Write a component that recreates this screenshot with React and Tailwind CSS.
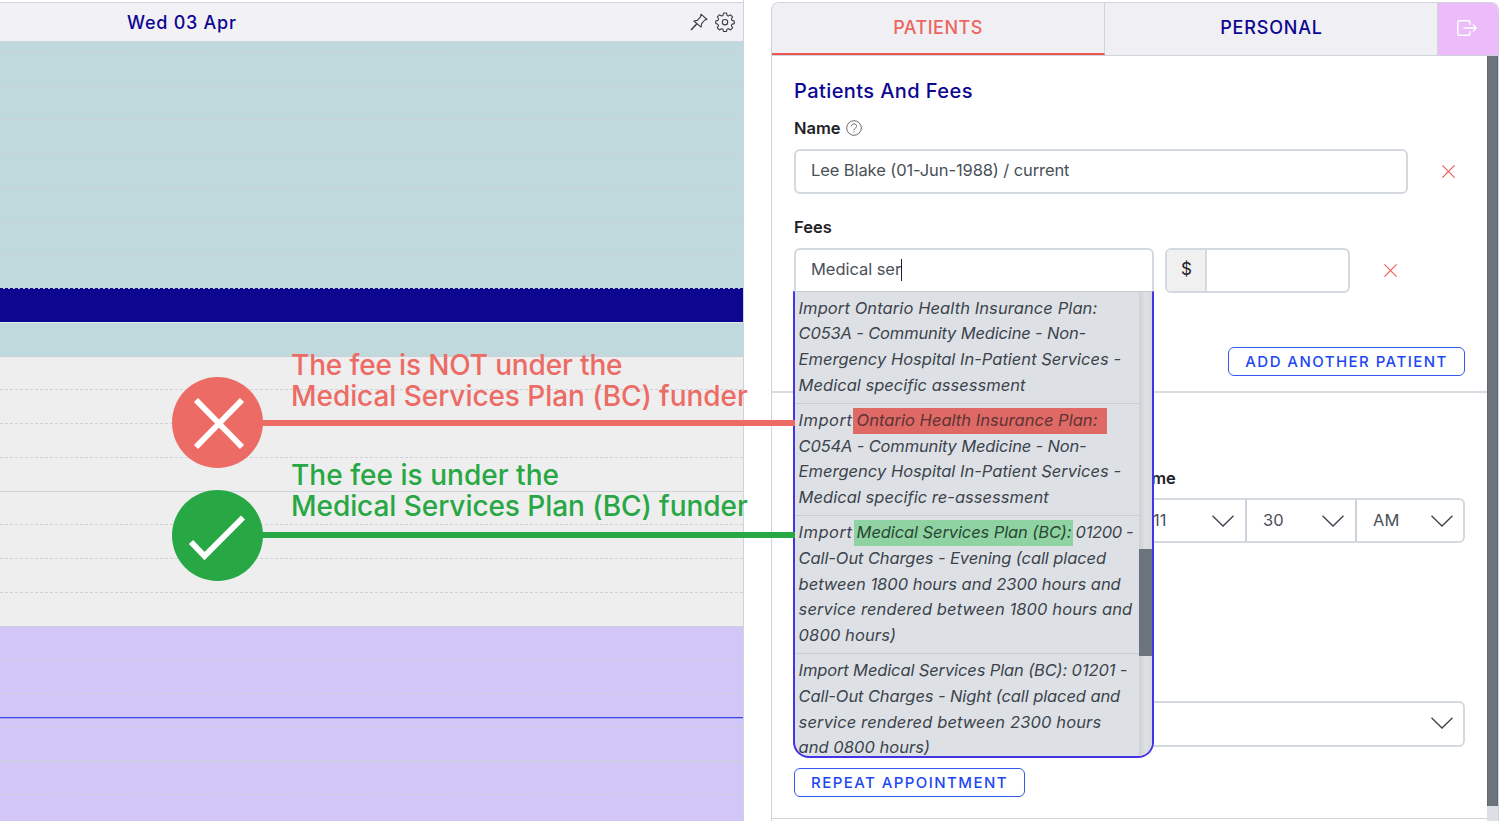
import React from 'react';

const slots = [
    { tone: 'bg-[#bfd9dc]', line: 'border-[#cccfda]', count: 7, start: 1 },
    { tone: 'bg-[#0d0691]', line: 'border-[#dfeaf0]', count: 1, start: 8 },
    { tone: 'bg-[#bfd9dc]', line: 'border-[#cccfda]', count: 1, start: 9 },
    { tone: 'bg-[#eeeeee]', line: 'border-[#ccd2d8]', count: 8, start: 10 },
    { tone: 'bg-[#d2c6f7]', line: 'border-[#c9d0d2]', count: 6, start: 18 }
].flatMap(({ tone, line, count, start }) =>
    Array.from({ length: count }, (_, i) => ({ tone, line, number: start + i }))
);

const slotBorder = (number, line) => {
    if (number === 7) return 'border-dashed border-[#0d0691]';
    if (number === 8 || number % 4 === 1) return `border-solid ${line}`;
    return `border-dashed ${line}`;
};

const feeOptions = [
    {
        lines: [
            { text: 'Import Ontario Health Insurance Plan:', spacing: 'tracking-[0.09px]' },
            { text: 'C053A - Community Medicine - Non-', spacing: 'tracking-[-0.16px]' },
            { text: 'Emergency Hospital In-Patient Services -', spacing: 'tracking-[0.01px]' },
            { text: 'Medical specific assessment', spacing: 'tracking-[0.02px]' }
        ]
    },
    {
        lines: [
            {
                text: 'Import',
                mark: 'Ontario Health Insurance Plan:',
                markClass: 'left-[54px] w-[254px] pl-1 tracking-[0.03px] bg-[#df6964] text-[#5b3436]',
                spacing: 'tracking-[0.5px]'
            },
            { text: 'C054A - Community Medicine - Non-', spacing: 'tracking-[-0.16px]' },
            { text: 'Emergency Hospital In-Patient Services -', spacing: 'tracking-[0.01px]' },
            { text: 'Medical specific re-assessment', spacing: 'tracking-[0.03px]' }
        ]
    },
    {
        lines: [
            {
                text: 'Import',
                mark: 'Medical Services Plan (BC):',
                markClass: 'left-[55px] w-[219px] pl-[3px] tracking-[-0.1px] bg-[#8fd3a2] text-[#294735]',
                after: '01200 -',
                spacing: 'tracking-[0.5px]'
            },
            { text: 'Call-Out Charges - Evening (call placed', spacing: 'tracking-[-0.1px]' },
            { text: 'between 1800 hours and 2300 hours and', spacing: 'tracking-[-0.01px]' },
            { text: 'service rendered between 1800 hours and', spacing: 'tracking-[0.1px]' },
            { text: '0800 hours)', spacing: 'tracking-[0.1px]' }
        ]
    },
    {
        lines: [
            { text: 'Import Medical Services Plan (BC): 01201 -', spacing: 'tracking-[-0.13px]' },
            { text: 'Call-Out Charges - Night (call placed and', spacing: 'tracking-[-0.1px]' },
            { text: 'service rendered between 2300 hours', spacing: 'tracking-[0.12px]' },
            { text: 'and 0800 hours)', spacing: 'tracking-[0.03px]' }
        ]
    }
];

const PinIcon = () => (
    <svg className="h-[18px] w-[18px]" viewBox="0 0 18 18" fill="none" stroke="#3b3d44" strokeWidth="1.1" strokeLinejoin="round">
        <path d="M11 1.2 17 6.5 14.8 7 11.5 10.8 11.1 14.2 3.8 8 7.3 7.4 10.5 3.8Z" />
        <path d="M6.9 10.8 1 17" strokeWidth="1.5" />
    </svg>
);

const GearIcon = () => (
    <svg className="h-5 w-5" viewBox="0 0 20 20" fill="none" stroke="#3b3d44" strokeWidth="1.1" strokeLinejoin="round">
        <path d="M8.5 1h3l.6 2.4 1.3.6 2.2-1.2 2 2-1.2 2.2.6 1.4 2.3.6v2.6l-2.4.7-.5 1.4 1.2 2.1-2.1 2.1-2.1-1.2-1.4.6-.6 2.2h-2.8L8 17.3l-1.4-.6-2.2 1.2-2.1-2.1 1.2-2.1-.6-1.4L.7 11.6V9l2.3-.6.6-1.4-1.2-2.2 2-2L6.6 4l1.4-.6Z" />
        <circle cx="10" cy="10.2" r="2.7" />
    </svg>
);

const CloseIcon = () => (
    <svg className="h-[13px] w-[13px] shrink-0" viewBox="0 0 13 13" stroke="#ec5f5a" strokeWidth="1.2">
        <path d="M.4.4l12.2 12.2M12.6.4.4 12.6" />
    </svg>
);

const ChevronIcon = () => (
    <svg className="h-3 w-[22px] shrink-0" viewBox="0 0 22 12" fill="none" stroke="#3b4148" strokeWidth="1.3">
        <path d="M.5.7 11 11 21.5.7" />
    </svg>
);

const CalendarColumn = () => (
    <div className="flex h-full w-[744px] shrink-0 flex-col overflow-hidden border-r border-[#cdd4dc] pt-0.5">
        <div className="flex h-10 shrink-0 items-center justify-between border-y border-[#cdd4dc] bg-[#f2f1f6] pr-2">
            <h2 className="pl-[127px] text-[18px] font-medium tracking-[0.75px] text-[#0d0691]">Wed 03 Apr</h2>
            <div className="flex items-center gap-[7px]">
                <PinIcon />
                <GearIcon />
            </div>
        </div>
        <div className="h-[10.9px] shrink-0 border-b border-dashed border-[#cccfda] bg-[#bfd9dc]" />
        {slots.map(({ tone, line, number }) => (
            <div key={number} className={`h-[33.75px] shrink-0 border-b ${tone} ${slotBorder(number, line)}`}>
                {number === 20 && <div className="mt-[22.5px] h-[2px] border-b border-[#a9a2f4] bg-[#3b46e8]" />}
            </div>
        ))}
    </div>
);

const FeeDropdown = () => (
    <div className="absolute top-[291px] left-[793px] z-10 flex h-[467px] w-[361px] overflow-hidden rounded-b-[16px] border-x-2 border-b-2 border-t border-[#4334e8] border-t-[#c6ccd3] bg-[#dde1e6]">
        <div className="-mt-[0.5px] min-w-0 flex-1 text-[16.5px] leading-[25.75px] text-[#3c434b] italic">
            {feeOptions.map((option, index) => (
                <div key={index} className="border-b border-[#c9ced4] pt-1 pb-[4.3px] pl-[3.6px]">
                    {option.lines.map((line) => (
                        <div key={line.text} className={`relative whitespace-nowrap ${line.spacing}`}>
                            {line.text}
                            {line.mark && (
                                <span className={`absolute top-0 h-[26px] ${line.markClass}`}>{line.mark}</span>
                            )}
                            {line.after && <span className="absolute left-[277px] tracking-[-0.35px]">{line.after}</span>}
                        </div>
                    ))}
                </div>
            ))}
        </div>
        <div className="w-[13px] shrink-0 bg-linear-to-r from-[#cdd1d3] via-[#dfe2e4] to-[#d6dadc] pt-[257px]">
            <div className="h-[107px] bg-[#6b747d]" />
        </div>
    </div>
);

const Annotation = ({ color, titleClass, lineClass, title, children }) => (
    <div className={`flex ${color}`}>
        <svg className="h-[91px] w-[91px] shrink-0" viewBox="0 0 91 91">
            <circle cx="45.5" cy="45.5" r="45.5" fill="currentColor" />
            <g fill="none" stroke="#fff" strokeWidth="5.8">{children}</g>
        </svg>
        <div className="relative flex-1">
            <p className={`absolute left-7 text-[28px] leading-[31px] font-medium whitespace-nowrap ${titleClass}`}>
                {title}
                <br />
                <span className="tracking-[-0.06px]">Medical Services Plan (BC) funder</span>
            </p>
            <div className={`-ml-1 h-1.5 bg-current ${lineClass}`} />
        </div>
    </div>
);

const PatientPanel = () => (
    <div className="mt-0.5 ml-[27px] flex h-[819px] w-[728px] flex-col overflow-hidden rounded-t-lg border border-b-0 border-[#cdd4dc]">
        <div className="flex h-[53px] shrink-0 border-b border-[#cdd4dc] bg-[#f0eff4] text-[18px] font-medium">
            <div className="flex w-[333px] items-center justify-center border-r border-b-2 border-r-[#cdd4dc] border-b-[#e9574f] pb-px text-[#ec6660]">
                <span className="tracking-[0.45px]">PATIENTS</span>
            </div>
            <div className="flex w-[333px] items-center justify-center border-r border-[#cdd4dc] pb-[3px] pl-px text-[#0d0691]">
                <span className="tracking-[0.8px]">PERSONAL</span>
            </div>
            <div className="flex flex-1 items-center justify-center bg-[#ebbcf9] pr-0.5 pb-0.5">
                <svg className="h-4 w-5" viewBox="0 0 20 16" fill="none" stroke="#fff" strokeWidth="1.4" strokeLinejoin="round">
                    <path d="M13 5V2q0-1.2-1.2-1.2H2Q.8.8.8 2v12q0 1.2 1.2 1.2h9.8q1.2 0 1.2-1.2v-3M6.5 8h12.7M16 4.6 19.2 8 16 11.4" />
                </svg>
            </div>
        </div>
        <div className="flex flex-1">
            <div className="flex flex-1 flex-col">
                <section className="h-[337px] border-b-2 border-[#d8dde2] pl-[22px]">
                    <h1 className="pt-[21px] text-[20px] leading-7 font-medium tracking-[0.42px] text-[#0d0691]">Patients And Fees</h1>
                    <div className="mt-[11px] flex h-6 items-center gap-[5px] text-[16.5px] font-semibold text-[#1f2227]">
                        Name
                        <svg className="h-4 w-4" viewBox="0 0 16 16" fill="none" stroke="#666a70" strokeWidth="1">
                            <circle cx="8" cy="8" r="7.3" />
                            <path d="M5.400 6.400c0-3.400 5.200-3.300 5.200-.2C10.600 8.100 8 8.200 8 10.300M8 11.500v1.200" />
                        </svg>
                    </div>
                    <div className="mt-[9px] flex items-center">
                        <div className="flex h-[45px] w-[614px] items-center rounded-md border-2 border-[#d3d9df] px-[15px] pb-0.5 text-[16.5px] text-[#495057]">
                            <span className="tracking-[-0.1px]">Lee Blake (01-Jun-1988) / current</span>
                        </div>
                        <div className="ml-[34px] flex"><CloseIcon /></div>
                    </div>
                    <div className="mt-[21px] h-6 text-[16.5px] leading-6 font-semibold text-[#1f2227]">Fees</div>
                    <div className="mt-[9px] flex items-center">
                        <div className="flex h-[45px] w-[360px] items-center rounded-t-md border-2 border-[#d3d9df] px-[15px] pb-0.5 text-[16.5px] text-[#495057]">
                            <span className="tracking-[-0.05px]">Medical ser</span>
                            <span className="h-[22px] w-px bg-[#1f2227]" />
                        </div>
                        <div className="ml-[11px] flex h-[45px] w-[185px] rounded-md border-2 border-[#d3d9df] text-[17px]">
                            <div className="flex w-10 items-center justify-center rounded-l border-r-2 border-[#d3d9df] bg-[#f0f0f0] pb-px pl-px text-[#1f2227]">$</div>
                        </div>
                        <div className="ml-[34px] flex"><CloseIcon /></div>
                    </div>
                    <div className="mt-[54px] flex justify-end pr-[22px]">
                        <button className="h-[29px] w-[237px] rounded-md border-[1.5px] border-[#3559ed] pt-px text-[15px] font-medium tracking-[1.45px] whitespace-nowrap text-[#2148ef]">ADD ANOTHER PATIENT</button>
                    </div>
                </section>
                <section className="h-[426px] shrink-0 border-b border-[#cdd4dc] pr-[22px] pl-[22px]">
                    <div className="pt-[73px] pl-[342px] text-[16.5px] leading-6 font-semibold text-[#1f2227]">Time</div>
                    <div className="mt-2 ml-[341px] flex h-[45px] rounded-md border-2 border-[#d3d9df] text-[16.5px] text-[#495057]">
                        <div className="flex w-[110px] items-center justify-between border-r-2 border-[#cdd3da] pr-[11px] pl-4">11<ChevronIcon /></div>
                        <div className="flex w-[110px] items-center justify-between border-r-2 border-[#cdd3da] pr-[11px] pl-4">30<ChevronIcon /></div>
                        <div className="flex flex-1 items-center justify-between pr-[10px] pl-4">AM<ChevronIcon /></div>
                    </div>
                    <div className="mt-[158px] flex h-[46px] items-center justify-end rounded-md border-2 border-[#d3d9df] pr-[10px] pb-[3px]"><ChevronIcon /></div>
                    <button className="mt-[21px] block h-[29px] w-[231px] rounded-md border-[1.5px] border-[#3559ed] pt-px text-[15px] font-medium tracking-[1.43px] whitespace-nowrap text-[#2148ef]">REPEAT APPOINTMENT</button>
                </section>
            </div>
            <div className="w-[11px] bg-[#dcdfe3]">
                <div className="h-[750px] border-x border-[#5f6973] bg-[#6b747d]" />
            </div>
        </div>
    </div>
);

const App = () => {
    return (
        <div className="relative flex h-[821px] w-[1500px] overflow-hidden bg-white font-['Inter',sans-serif]">
            <CalendarColumn />
            <PatientPanel />
            <FeeDropdown />
            <div className="absolute top-[377px] left-[172px] z-20 flex w-[623px] flex-col gap-[22px]">
                <Annotation
                    color="text-[#ed6b65]"
                    titleClass="bottom-[56px] tracking-[-0.15px]"
                    lineClass="mt-[43px]"
                    title="The fee is NOT under the"
                >
                    <path d="M24 23 70 70M70 23 24 70" />
                </Annotation>
                <Annotation
                    color="text-[#28a745]"
                    titleClass="bottom-[59px] tracking-[0.03px]"
                    lineClass="mt-[42px]"
                    title="The fee is under the"
                >
                    <path d="M19 52 32.500 66 71 27.500" />
                </Annotation>
            </div>
        </div>
    );
};

export default App;
